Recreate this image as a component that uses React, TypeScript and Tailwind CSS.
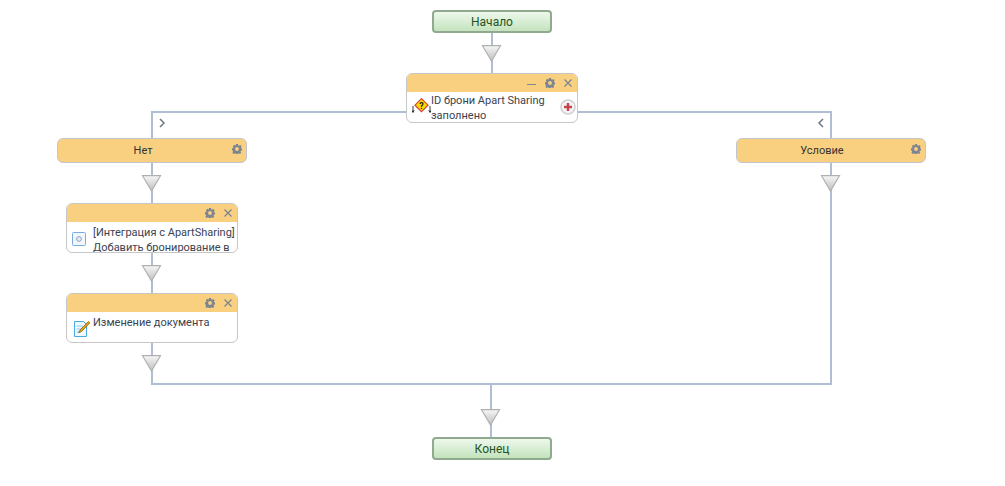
import React from "react";

const font = { fontFamily: 'Roboto, "Liberation Sans", sans-serif' };

function Gear({ className = "" }: { className?: string }) {
  return (
    <svg width="10" height="10" viewBox="0 0 11 11" className={className}>
      <path
        fillRule="evenodd"
        fill="#7d8492"
        d="M4.4 0h2.2l.3 1.5 1 .4 1.2-.8 1.5 1.5-.8 1.2.4.9 1 .2v2.2l-1.4.3-.4 1 .8 1.2-1.5 1.500-1.2-.8-.9.4-.3 1.400H4.400l-.3-1.400-1-.4-1.200.8L.4 9.600l.8-1.200-.4-1L0 7V4.800l1.300-.3.4-.9-.8-1.200L2.400.9l1.200.8.6-.3zM5.500 3.400a2.100 2.100 0 1 0 0 4.200 2.100 2.100 0 0 0 0-4.200z"
      />
    </svg>
  );
}

function Close() {
  return (
    <svg width="8" height="8" viewBox="0 0 8 8">
      <path d="M.5.5l7 7M7.500.5l-7 7" stroke="#7d8492" strokeWidth="1.3" fill="none" />
    </svg>
  );
}

function Card({
  className,
  minus,
  icon,
  textClass,
  action,
  children,
}: {
  className: string;
  minus?: boolean;
  icon: React.ReactNode;
  textClass: string;
  action?: React.ReactNode;
  children: React.ReactNode;
}) {
  return (
    <div className={`absolute flex h-[50px] w-[172px] flex-col overflow-hidden rounded-[6px] border border-[#c6c6c6] bg-white ${className}`}>
      <div className="flex h-[18px] shrink-0 items-center justify-end gap-[9px] bg-[#f9d07f] pr-[5px]">
        {minus && <div className="mt-[3px] h-[1px] w-[9px] bg-[#7d8492]" />}
        <Gear />
        <Close />
      </div>
      <div className="relative flex flex-1">
        {icon}
        <div className={`whitespace-nowrap text-[11px] leading-[15px] text-[#3b4250] ${textClass}`}>{children}</div>
        {action}
      </div>
    </div>
  );
}

function Branch({ className, label }: { className: string; label: string }) {
  return (
    <div className={`absolute flex h-[25px] w-[190px] items-center justify-center rounded-[6px] border border-[#c2c5cc] bg-[#f9d07f] pr-[18px] pt-[2px] text-[11px] text-[#333333] ${className}`}>
      <span>{label}</span>
      <Gear className="absolute right-[4px] top-[5px]" />
    </div>
  );
}

function Terminal({ className, label }: { className: string; label: string }) {
  return (
    <div className={`absolute flex h-[23px] w-[120px] items-center justify-center rounded-[4px] border-2 border-[#90a98f] bg-gradient-to-b from-[#eef8ec] to-[#c3e3bd] text-[12px] text-[#24541f] ${className}`}>
      {label}
    </div>
  );
}

function Arrow({ x, y }: { x: number; y: number }) {
  return (
    <g transform={`translate(${x} ${y})`}>
      <path d="M.5.700h18L9.500 16z" fill="url(#tri)" stroke="#b0b0b0" strokeWidth="1.2" />
    </g>
  );
}

export default function App() {
  return (
    <div className="relative h-[486px] w-[1005px] overflow-hidden bg-white" style={font}>
      <svg width="1005" height="486" className="absolute left-0 top-0">
        <defs>
          <linearGradient id="tri" x1="0" y1="0" x2="0" y2="1">
            <stop offset="0" stopColor="#f7f7f7" />
            <stop offset="1" stopColor="#bdbdbd" />
          </linearGradient>
        </defs>
        <g fill="none" stroke="#b0bed3" strokeWidth="2">
          <path d="M492 33V73" />
          <path d="M406 112H152V138" />
          <path d="M578 112H831V138" />
          <path d="M152 163V203M152 253V293M152 343V384H831V163" />
          <path d="M491 384V437" />
        </g>
        <path d="M160 119l4 4-4 4" fill="none" stroke="#6f7785" strokeWidth="1.5" />
        <path d="M823 119l-4 4 4 4" fill="none" stroke="#6f7785" strokeWidth="1.5" />
        <Arrow x={482} y={45} />
        <Arrow x={142} y={175} />
        <Arrow x={142} y={265} />
        <Arrow x={142} y={355} />
        <Arrow x={821} y={175} />
        <Arrow x={481} y={409} />
      </svg>

      <Terminal className="left-[432px] top-[10px]" label="Начало" />
      <Terminal className="left-[432px] top-[437px]" label="Конец" />

      <Card
        className="left-[406px] top-[73px]"
        minus
        textClass="mt-[1px]"
        icon={
          <svg width="19" height="16" viewBox="0 0 19 16" className="ml-[5px] mt-[6px] shrink-0">
            <path d="M9.500 .7l6.500 6.500-6.500 6.500L3 7.200z" fill="#ffdc00" stroke="#d1432b" strokeWidth="1.200" />
            <text x="9.500" y="10.500" textAnchor="middle" fontSize="9" fontWeight="700" fill="#222">?</text>
            <path d="M1 8v6M-.2 12.300L1 14.500l1.200-2.200M18 8v6M16.800 12.300l1.200 2.200 1.200-2.200" stroke="#222" strokeWidth="0.900" fill="none" />
          </svg>
        }
        action={
          <svg width="16" height="16" viewBox="0 0 16 16" className="absolute right-[1px] top-[7px]">
            <circle cx="8" cy="8" r="7" fill="#f5f5f5" stroke="#cfcfcf" strokeWidth="1.500" />
            <path d="M8 4v8M4 8h8" stroke="#c8434b" strokeWidth="2.400" />
          </svg>
        }
      >
        ID брони Apart Sharing
        <br />
        заполнено
      </Card>

      <Branch className="left-[57px] top-[138px]" label="Нет" />
      <Branch className="left-[736px] top-[138px]" label="Условие" />

      <Card
        className="left-[66px] top-[203px]"
        textClass="ml-[7px] mt-[3px]"
        icon={
          <svg width="14" height="14" viewBox="0 0 14 14" className="ml-[5px] mt-[10px] shrink-0">
            <rect x=".5" y=".5" width="13" height="13" rx="1" fill="#f2f7fd" stroke="#7aaade" />
            <circle cx="7" cy="7" r="2.400" fill="#e8edf4" stroke="#8aa3c4" />
          </svg>
        }
      >
        [Интеграция с ApartSharing]
        <br />
        Добавить бронирование в
      </Card>

      <Card
        className="left-[66px] top-[293px]"
        textClass="ml-[3px] mt-[3px]"
        icon={
          <svg width="16" height="16" viewBox="0 0 16 16" className="ml-[7px] mt-[9px] shrink-0">
            <path d="M.5.500h9l3 3v12H.5z" fill="#f2f9fe" stroke="#45ace9" />
            <path d="M2.500 5h6.500M2.500 8h5M2.500 11h3.500" stroke="#8fc9ee" />
            <path d="M14.500.5l1.400 1.400-8.400 8.600-2.800 1.300 1.300-2.800z" fill="#e8a317" stroke="#7a5209" strokeWidth="0.700" />
          </svg>
        }
      >
        Изменение документа
      </Card>
    </div>
  );
}
